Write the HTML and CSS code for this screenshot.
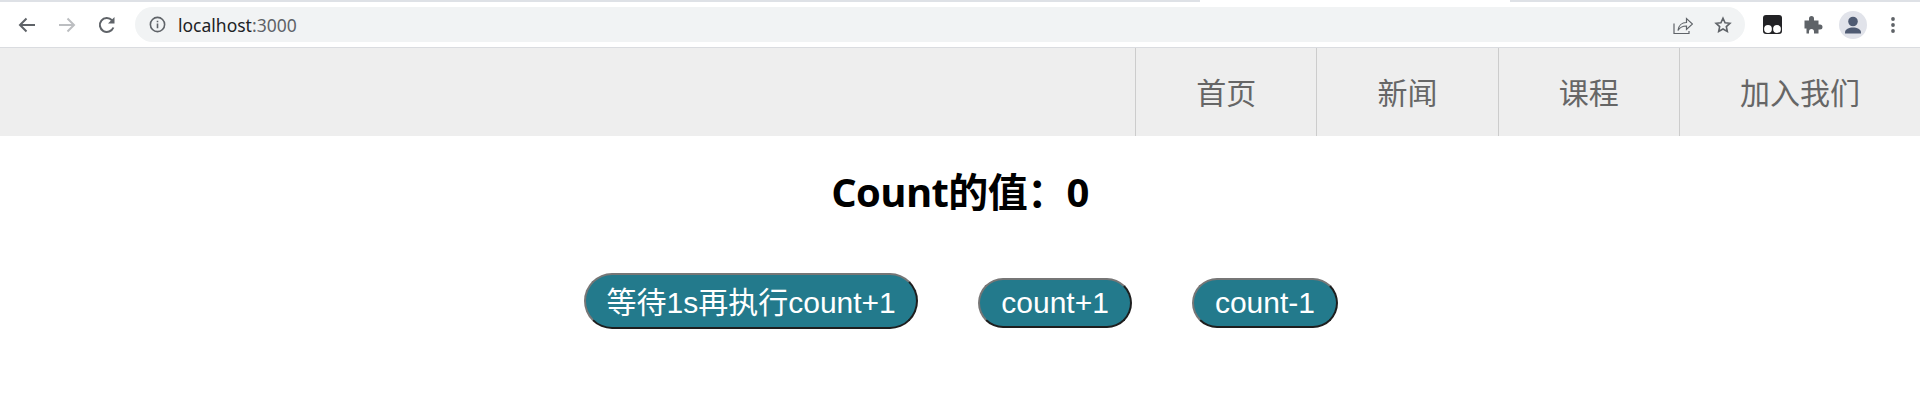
FILE: index.html
```html
<!DOCTYPE html>
<html>
<head>
    <meta charset="UTF-8">
    <title>localhost:3000</title>
    <link rel="stylesheet" href="styles.css">
</head>
<body>
<div class="tabstrip"><div class="tab-gap"></div></div>
<div class="toolbar">
    <svg class="tool-icon" viewBox="0 0 24 24"><path d="M20 12H5M11.500 5.500L5 12l6.500 6.500" fill="none" stroke="#5f6368" stroke-width="2"/></svg>
    <svg class="tool-icon" viewBox="0 0 24 24"><path d="M4 12h15M12.500 5.500L19 12l-6.500 6.500" fill="none" stroke="#bcbec1" stroke-width="2"/></svg>
    <svg class="tool-icon" viewBox="0 0 24 24"><path d="M18.400 14.500A7 7 0 1 1 17 7.200" fill="none" stroke="#5f6368" stroke-width="2"/><path d="M19.500 4v6.500H13z" fill="#5f6368"/></svg>
    <div class="omnibox">
        <svg class="info-icon" viewBox="0 0 16 16"><circle cx="8" cy="8" r="6.700" fill="none" stroke="#5f6368" stroke-width="1.500"/><path d="M8 7v4.500M8 4.400v1.500" stroke="#5f6368" stroke-width="1.500"/></svg>
        <span class="url">localhost<span class="url-port">:3000</span></span>
        <div class="omni-right">
            <svg class="omni-icon" viewBox="0 0 20 20"><path d="M1 8.500v10h15V16" fill="none" stroke="#5f6368" stroke-width="1.200"/><path d="M5 15.500c.5-5 4-8 8.500-8V3.500L19.500 9l-6 5.500V11c-3.500 0-6.500 1-8.500 4.500z" fill="none" stroke="#5f6368" stroke-width="1.200"/></svg>
            <svg class="omni-icon star" viewBox="0 0 20 20"><path d="M10 2.500l2.300 5 5.400.6-4 3.700 1.100 5.400L10 14.500l-4.800 2.700 1.100-5.400-4-3.700 5.400-.6z" fill="none" stroke="#5f6368" stroke-width="1.800"/></svg>
        </div>
    </div>
    <div class="ext-group">
        <svg class="ext-icon" viewBox="0 0 19 19"><rect width="19" height="19" rx="3" fill="#222225"/><circle cx="5" cy="14" r="3.900" fill="#fff"/><circle cx="14" cy="14" r="3.900" fill="#fff"/></svg>
        <svg class="ext-icon puzzle" viewBox="0 0 19 19"><path d="M0.500 5.500h4.500V3.500a2.500 2.500 0 0 1 5 0v2h4.500v4h1.500a2.500 2.500 0 0 1 0 5h-1.500V18.500H10v-2a2.500 2.500 0 0 0-5 0v2H2.500v-5H0.500z" fill="#5f6368"/></svg>
        <div class="avatar">
            <svg viewBox="0 0 28 28" width="28" height="28"><circle cx="14" cy="10.500" r="4.800" fill="#4f5b73"/><path d="M6 21.500c0-3.500 4-5 8-5s8 1.500 8 5v1H6z" fill="#4f5b73"/></svg>
        </div>
        <svg class="menu-icon" viewBox="0 0 4 16"><circle cx="2" cy="2" r="1.900" fill="#5f6368"/><circle cx="2" cy="8" r="1.900" fill="#5f6368"/><circle cx="2" cy="14" r="1.900" fill="#5f6368"/></svg>
    </div>
</div>
<div class="nav">
    <a class="nav-item">首页</a>
    <a class="nav-item">新闻</a>
    <a class="nav-item">课程</a>
    <a class="nav-item">加入我们</a>
</div>
<h2 class="count">Count的值：0</h2>
<div class="actions">
    <button class="btn btn-wide">等待1s再执行count+1</button>
    <button class="btn">count+1</button>
    <button class="btn">count-1</button>
</div>
</body>
</html>
```

FILE: styles.css
```css
body {
    margin: 0;
    background-color: #fff;
    font-family: "Liberation Sans", "Noto Sans CJK SC", sans-serif;
    overflow: hidden;
}

.tabstrip {
    height: 2px;
    background-color: #dee1e6;
    display: flex;
    justify-content: flex-end;
    padding-right: 410px;
}

.tab-gap {
    width: 310px;
    background-color: #fff;
}

.toolbar {
    height: 46px;
    box-sizing: border-box;
    display: flex;
    align-items: center;
    padding-left: 15px;
    border-bottom: 1px solid #dadce0;
}

.tool-icon {
    width: 24px;
    height: 24px;
    margin-right: 16px;
}

.omnibox {
    flex: 1;
    height: 35px;
    background-color: #f1f3f4;
    border-radius: 18px;
    display: flex;
    align-items: center;
    padding: 0 13px 0 14px;
}

.info-icon {
    width: 17px;
    height: 17px;
}

.url {
    font-family: "Noto Sans", "Open Sans", sans-serif;
    font-size: 17.500px;
    color: #202124;
    margin-left: 12px;
}

.url-port {
    color: #5f6368;
}

.omni-right {
    margin-left: auto;
    display: flex;
    gap: 21px;
    align-items: center;
}

.omni-icon {
    width: 20px;
    height: 20px;
}

.omni-icon.star {
    width: 18px;
    height: 18px;
}

.ext-group {
    display: flex;
    align-items: center;
    padding: 0 25px 0 18px;
}

.ext-icon {
    width: 19px;
    height: 19px;
}

.puzzle {
    margin-left: 22px;
}

.avatar {
    width: 28px;
    height: 28px;
    border-radius: 50%;
    background-color: #e1e3ea;
    margin: 0 24px 0 16px;
}

.menu-icon {
    width: 4px;
    height: 16px;
}

.nav {
    height: 88px;
    background-color: #eee;
    display: flex;
    justify-content: flex-end;
}

.nav-item {
    padding: 3px 60.170px 0;
    line-height: 85px;
    font-size: 30px;
    color: #666;
    border-left: 1px solid #ccc;
}

.nav-item:last-child {
    padding: 3px 60px 0;
}

.count {
    margin: 31px 0 0;
    text-align: center;
    font-family: "Open Sans", "Noto Sans CJK SC", sans-serif;
    font-size: 40px;
    line-height: 50px;
    font-weight: bold;
    letter-spacing: -0.600px;
    color: #000;
}

.actions {
    margin-top: 56px;
    padding-left: 2px;
    display: flex;
    justify-content: center;
    align-items: flex-end;
    gap: 60px;
}

.btn {
    background-color: #237a8c;
    color: #fff;
    font-family: "Liberation Sans", "Noto Sans CJK SC", sans-serif;
    font-size: 30px;
    line-height: 34px;
    padding: 6px 21px;
    margin-bottom: 1px;
    border: 2px solid;
    border-color: #767676 #1e1e1e #1e1e1e #767676;
    border-radius: 30px;
}

.btn-wide {
    line-height: 40px;
    padding: 8px 20.500px 4px;
    margin-bottom: 0;
}
```
